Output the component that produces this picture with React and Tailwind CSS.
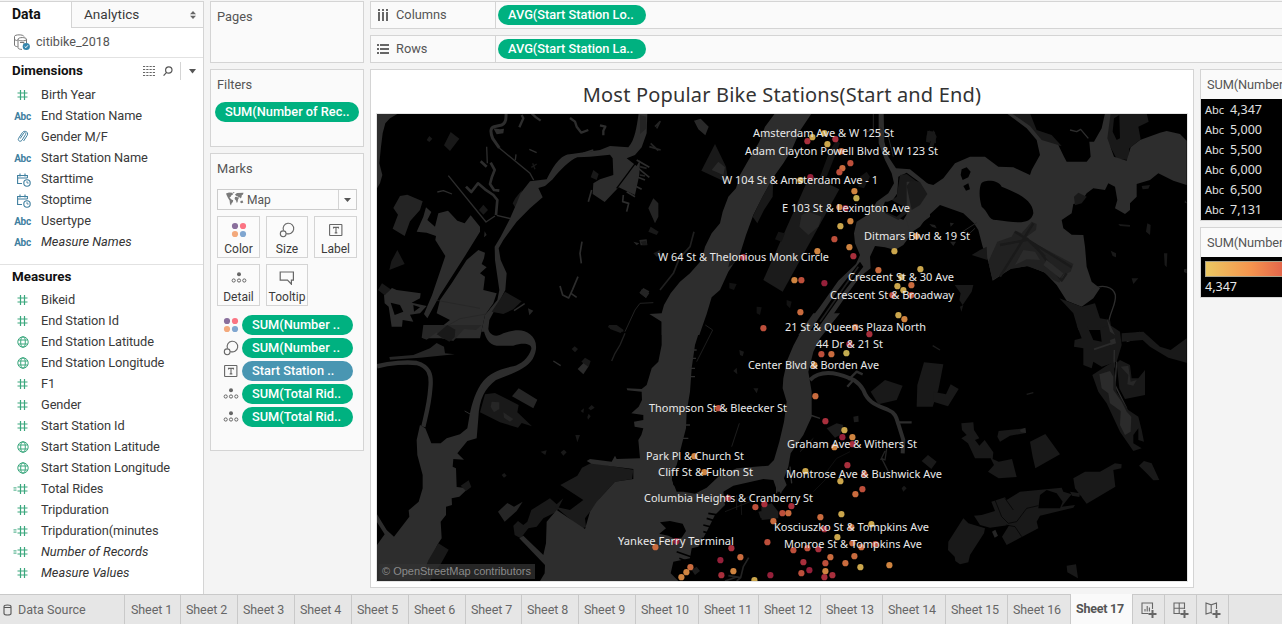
import React from "react";

const WATER = "#2d2d2d";
const PARK = "#191919";

/* ---------- icons ---------- */
function HashIcon({ calc }) {
  return (
    <svg width="16" height="12" viewBox="0 0 16 12" fill="none" stroke="#3aa77d" strokeWidth="1.2">
      <path d="M8.5 1v10M12.5 1v10M5.500 4h10M5.500 8h10" />
      {calc && <path d="M1.500 4.900h3M1.500 7.100h3" strokeWidth="1" />}
    </svg>
  );
}
function GlobeIcon() {
  return (
    <svg width="12" height="12" viewBox="0 0 12 12" fill="none" stroke="#3aa77d" strokeWidth="1">
      <circle cx="6" cy="6" r="5.2" />
      <ellipse cx="6" cy="6" rx="2.3" ry="5.2" />
      <path d="M1.3 4h9.4M1.3 8h9.4" />
    </svg>
  );
}
function ClipIcon() {
  return (
    <svg width="12" height="13" viewBox="0 0 12 13" fill="none" stroke="#3f7f9f" strokeWidth="1">
      <path d="M3.2 8.6 6.7 3.2c1-1.4 2.8-.2 1.9 1.200L5 10.200c-1.500 2.300-4.800.4-3.400-1.900L5.300 2.700C7.300-.2 12 1.800 10.200 5.400L6.600 11" />
    </svg>
  );
}
function DateIcon() {
  return (
    <svg width="14" height="14" viewBox="0 0 14 14" fill="none" stroke="#3f7f9f" strokeWidth="1.1">
      <path d="M5 10.500H.6V2.500h9.800v2.500M.6 5h9.800M3 .5v3M8 .5v3" />
      <circle cx="10" cy="10" r="3.200" />
      <path d="M10 8.200V10h1.600" strokeWidth=".9" />
    </svg>
  );
}
function FieldIcon({ type }) {
  if (type === "abc")
    return <span className="mt-px text-[10px] font-bold text-[#3f7f9f] tracking-[-0.3px]">Abc</span>;
  if (type === "clip") return <ClipIcon />;
  if (type === "date") return <span className="ml-[2px] mt-[3px] flex"><DateIcon /></span>;
  if (type === "globe") return <GlobeIcon />;
  return <span className="-ml-[5px] flex"><HashIcon calc={type === "calc"} /></span>;
}
function ColorIcon() {
  return (
    <svg width="16" height="16" viewBox="0 0 16 16">
      <circle cx="4" cy="4" r="3.100" fill="#8a6f9c" />
      <circle cx="12" cy="4" r="3.100" fill="#fb7483" />
      <circle cx="4" cy="12" r="3.100" fill="#f3a97c" />
      <circle cx="12" cy="12" r="3.100" fill="#80a6d0" />
    </svg>
  );
}
function SizeIcon() {
  return (
    <svg width="16" height="16" viewBox="0 0 16 16" fill="none" stroke="#666" strokeWidth="1.1">
      <path d="M4.500 8.500A5.300 5.300 0 1 1 7.300 11.400" />
      <circle cx="4.200" cy="11.800" r="2.900" />
    </svg>
  );
}
function LabelIcon() {
  return (
    <svg width="14" height="14" viewBox="0 0 14 14" fill="none" stroke="#666" strokeWidth="1.1">
      <rect x=".6" y="1.500" width="12.300" height="11" rx=".5" />
      <path d="M4.500 5.500V4.400h5v1.100M7 4.400v5.400M5.700 9.900h2.600" />
    </svg>
  );
}
function DetailIcon() {
  return (
    <svg width="16" height="12" viewBox="0 0 16 12" fill="none" stroke="#666" strokeWidth="1">
      <circle cx="8" cy="2.200" r="2" fill="#666" stroke="none" />
      <circle cx="2.700" cy="8.500" r="1.600" />
      <circle cx="8" cy="8.500" r="1.600" />
      <circle cx="13.300" cy="8.500" r="1.600" />
    </svg>
  );
}
function TooltipIcon() {
  return (
    <svg width="16" height="14" viewBox="0 0 16 14" fill="none" stroke="#666" strokeWidth="1.200">
      <path d="M1.200 1h13.200v8.200h-2v4L8.500 9.200H1.200z" />
    </svg>
  );
}
function WorldIcon() {
  return (
    <svg width="18" height="14" viewBox="0 0 18 14" fill="#7a7a7a">
      <path d="M0 1.500 3 .6 6.500.8 7 2.500 5.500 3.200 4.500 5 3.500 5.200 5 7.200 7.200 8.200 6.800 10 5.500 11.500 5 13.500 4 12 3.600 8.500 2 6 .8 3.500zM6.800.2 8.500 0 7.800 1.600zM9 2.500 11 1 17.500.8 17 2.500 15.800 3.300 15.500 5.200 14.500 6.500 13.800 5 12.800 6.200 12 4.500 10 3.800zM9 5 11 4.800 12.800 6.500 12 7.500 11.600 10 10.800 11 10 8.500 8.600 7zM14.500 9 16.500 8.500 17.300 10.500 15.500 11.200 14.300 10.500z" />
    </svg>
  );
}

/* ---------- left pane ---------- */
const DIMENSIONS = [
  ["hash", "Birth Year"], ["abc", "End Station Name"], ["clip", "Gender M/F"], ["abc", "Start Station Name"],
  ["date", "Starttime"], ["date", "Stoptime"], ["abc", "Usertype"], ["abc", "Measure Names", true],
];
const MEASURES = [
  ["hash", "Bikeid"], ["hash", "End Station Id"], ["globe", "End Station Latitude"], ["globe", "End Station Longitude"],
  ["hash", "F1"], ["hash", "Gender"], ["hash", "Start Station Id"], ["globe", "Start Station Latitude"],
  ["globe", "Start Station Longitude"], ["calc", "Total Rides"], ["hash", "Tripduration"],
  ["calc", "Tripduration(minutes"], ["calc", "Number of Records", true], ["hash", "Measure Values", true],
];
function Fields({ rows }) {
  return (
    <ul>
      {rows.map(([type, name, italic]) => (
        <li key={name} className="flex h-[21px] items-center">
          <span className="flex w-[46px] shrink-0 -mr-[5px] pr-[1px] items-center justify-center">
            <FieldIcon type={type} />
          </span>
          <span className={italic ? "italic text-[#333]" : "tracking-[-0.09px] text-[#3a3a3a]"}>{name}</span>
        </li>
      ))}
    </ul>
  );
}
function DataPane() {
  return (
    <aside className="mt-px flex h-[593px] w-[204px] shrink-0 flex-col border-t border-r border-[#d4d4d4] bg-white">
      <div className="flex h-[26px] text-[14px]">
        <div className="w-[71px] pl-3 pt-[2px] font-bold text-[#111] leading-5">Data</div>
        <div className="flex flex-1 items-center justify-between border-b border-l border-[#d4d4d4] bg-[#fafafa] pr-[7px] pl-3 text-[13.600px] text-[#3a3a3a]">
          <span>Analytics</span>
          <svg width="6" height="8" viewBox="0 0 6 8" fill="#666"><path d="M3 0 6 3.200H0zM3 8 0 4.800h6z" /></svg>
        </div>
      </div>
      <div className="flex h-[30px] items-center border-b border-[#e2e2e2] pl-[14px] pb-px text-[#555]">
        <svg width="17" height="17" viewBox="0 0 17 17" fill="none" stroke="#777" strokeWidth="1">
          <path d="M10 2.500C9.500.3.500.3.500 2.500V11c0 1 1.500 1.600 3 1.600M.5 5c.3 1 1.500 1.500 3 1.600" />
          <path d="M12.500 9V5.300C12.500 3 4 3 4 5.300v8.500c0 1 2 1.600 4 1.600M4 5.400c.5 2 8 2 8.500 0M6 8.500h4v3" />
          <circle cx="12.300" cy="12.500" r="3.600" fill="#3385ac" stroke="none" />
          <path d="m10.700 12.500 1.200 1.200 2-2.400" stroke="#fff" />
        </svg>
        <span className="ml-[5px] text-[12.600px]">citibike_2018</span>
      </div>
      <div className="flex h-[26px] items-center pl-3 text-[#111]">
        <span className="flex-1 pt-px text-[13.400px] font-bold">Dimensions</span>
        <svg width="12" height="10" viewBox="0 0 12 10" fill="none" stroke="#666" strokeWidth="1">
          <path d="M0 .5h12M0 3.500h12M0 6.500h12M0 9.500h12" strokeDasharray="2.200 1.070" />
        </svg>
        <svg className="ml-[8px]" width="10" height="11" viewBox="0 0 10 11" fill="none" stroke="#555" strokeWidth="1.200">
          <circle cx="5.800" cy="4" r="3.200" /><path d="M3.600 6.300.6 9.600" />
        </svg>
        <span className="ml-[7px] h-[18px] w-px bg-[#d4d4d4]" />
        <svg className="ml-2 mr-[7px]" width="7" height="5" viewBox="0 0 7 5" fill="#555"><path d="M0 0h7L3.500 4.500z" /></svg>
      </div>
      <Fields rows={DIMENSIONS} />
      <div className="mt-[12px] flex h-[25px] items-center border-t border-[#e2e2e2] pl-3 text-[13.400px] font-bold text-[#111]">Measures</div>
      <Fields rows={MEASURES} />
    </aside>
  );
}

/* ---------- shelves ---------- */
function Pill({ children, blue, className }) {
  return (
    <span className={"flex items-center whitespace-nowrap rounded-full pl-[10px] font-medium text-white h-5 " + (blue ? "bg-[#4996b2] " : "bg-[#00b180] ") + className}>
      {children}
    </span>
  );
}
const CARD = "border border-[#d4d4d4] bg-[#fafafa]";
function MarkButton({ icon, label }) {
  return (
    <div className="flex h-[42px] flex-col items-center justify-between border border-[#d4d4d4] bg-[#fbfbfb] pt-[5px] text-[12px] text-[#3a3a3a]">
      <span className="flex h-4 items-center">{icon}</span>
      <span className="leading-[15px]">{label}</span>
    </div>
  );
}
function Cards() {
  const marks = [
    [<ColorIcon />, "SUM(Number .."], [<SizeIcon />, "SUM(Number .."], [<LabelIcon />, "Start Station .."],
    [<DetailIcon />, "SUM(Total Rid.."], [<DetailIcon />, "SUM(Total Rid.."],
  ];
  return (
    <section className="ml-[6px] mt-px flex w-[154px] shrink-0 flex-col gap-[6px] text-[#555]">
      <div className={CARD + " h-[62px] px-[6px] pt-[7px] leading-4"}>Pages</div>
      <div className={CARD + " h-[78px] pt-[7px]"}>
        <div className="px-[6px] leading-4">Filters</div>
        <Pill className="mx-1 mt-[9px]">SUM(Number of Rec..</Pill>
      </div>
      <div className={CARD + " h-[298px] pt-[7px]"}>
        <div className="px-[6px] leading-4">Marks</div>
        <div className="mx-[6px] mt-[12px] flex h-[21px] items-center border border-[#ccc] bg-[#fbfbfb] text-[12px]">
          <span className="ml-2 -mt-[2px]"><WorldIcon /></span>
          <span className="ml-[3px] flex-1 pt-px">Map</span>
          <span className="flex h-full w-[18px] items-center justify-center border-l border-[#d4d4d4]">
            <svg width="7" height="4" viewBox="0 0 7 4" fill="#555"><path d="M0 0h7L3.500 4z" /></svg>
          </span>
        </div>
        <div className="mx-[6px] mt-[6px] grid grid-cols-[43px_42px_43px] gap-[6px]">
          <MarkButton icon={<ColorIcon />} label="Color" />
          <MarkButton icon={<SizeIcon />} label="Size" />
          <MarkButton icon={<LabelIcon />} label="Label" />
          <MarkButton icon={<DetailIcon />} label="Detail" />
          <MarkButton icon={<TooltipIcon />} label="Tooltip" />
        </div>
        <div className="mt-[9px] flex flex-col gap-[3px]">
          {marks.map(([icon, label], i) => (
            <div key={i} className="flex items-center">
              <span className="flex w-[31px] justify-center pl-[9px]">{icon}</span>
              <Pill blue={i === 2} className="w-[111px]">{label}</Pill>
            </div>
          ))}
        </div>
      </div>
    </section>
  );
}
function Shelf({ icon, name, pill }) {
  return (
    <div className="flex h-7 shrink-0 items-center border border-r-0 border-[#d4d4d4] bg-[#fafafa] text-[#555]">
      <div className="flex h-full w-[125px] items-center gap-[7px] border-r border-[#d4d4d4] pl-[6px]">{icon}<span>{name}</span></div>
      <Pill className="ml-[2px] w-[148px]">{pill}</Pill>
    </div>
  );
}

/* ---------- map ---------- */
const P = (d, fill) => <path key={d} d={d} fill={fill} />;
const S = (d, w, c = WATER) => <path key={d} d={d} fill="none" stroke={c} strokeWidth={w} strokeLinejoin="round" />;

function Terrain() {
  return (
    <>
      <g transform="translate(370 60) scale(.33333)">
        {P("M21 162H82L60 175 46 190 38 220 33 260 28 310 37 345 30 370 21 385z", WATER)}
        {S("M408 160Q410 190 395 195L372 200Q356 205 368 235L388 264", 9)}
        {S("M388 264 480 340 491 360", 4)}
        {P("M370 205 390 208 402 206 400 220 380 223z", WATER)}
        {S("M448 202 460 175 455 165M485 160 498 172 512 182M600 174 615 185 620 200 634 218 655 210M690 196 706 200 700 212 700 226", 7)}
        {S("M478 268 500 278M438 283 436 300M350 260 352 310", 4)}
        {S("M332 304 350 320M362 308 374 330 366 350 360 372 372 390 388 392M288 380 304 396 324 370 345 388 370 405 382 420 378 465", 8)}
        {S("M235 347 348 486 375 468M202 396 220 392 246 402M380 466 422 476", 4)}
        {S("M570 678 578 705 596 714 608 688 624 650M636 545 630 580 634 610M620 712 603 700", 5)}
        {P("M242 216 268 236 240 273 222 256zM178 228 187 236 178 246 170 240z", PARK)}
        {P("M436 415 456 390 440 450 428 430zM327 450 340 434 354 450 340 464zM670 330 686 342 680 360 662 352z", PARK)}
        {P("M70 444 90 408 112 404 158 424 150 450 120 484 104 528 68 506 84 464z", "#242424")}
        {P("M140 515 160 470 168 442 184 456 172 480 195 500 205 460 234 452 262 482 284 490 302 466 330 500 330 515 290 580 210 705 172 775 162 762 186 706 226 588 196 540 198 528 170 518z", WATER)}
        {P("M210 720 245 670 290 600 325 570 345 578 342 595 335 612 350 622 330 640 345 650 340 690 380 700 370 730 345 765 330 835 160 835 160 800 205 808 240 780 200 760z", WATER)}
        {S("M195 720 330 745M200 815 270 776 360 760", 2, "#242424")}
        {P("M42 705 66 684 80 690 152 700 150 715 125 728 170 738 150 760 120 764 130 785 98 780 96 800 65 800 56 740 44 730z", WATER)}
        {P("M62 728 90 735 100 755 74 765zM130 735 150 742 132 755z", "#000")}
        {P("M24 690 36 670 62 688 44 706zM82 570 104 612 58 630 64 604z", PARK)}
        {P("M806 160H832L830 220 815 262 795 285 770 295 800 318 810 300 808 345 795 405 746 382 704 426 668 402 670 370 690 358 730 345 728 295 720 284 660 290 622 292C600 300 570 330 548 358L525 378 505 384 518 412 480 445 440 485 400 540 386 565 392 600 410 640 406 690 385 730 358 780 354 815H334L345 765 382 720 388 690 375 600 374 560 392 530 418 480 440 430 452 400 480 364 530 358C550 320 570 282 605 282L690 270 720 258 775 262C795 240 800 200 806 160z", WATER)}
        {S("M740 385 800 305", 4, "#000")}
        {S("M800 300 838 322M805 325 838 352M800 350 825 360M790 375 815 388M770 395 795 410M760 405 758 425 776 430 770 455M665 390 655 425M640 280 670 270", 5)}
        {P("M405 695 455 724 430 748 400 762 365 755z", PARK)}
        {S("M432 752 464 731", 4)}
        {P("M474 745 490 752 478 766zM344 514 350 525 342 532zM808 540 830 538 832 555 812 556zM790 545 808 550 800 556zM820 684 838 694 828 714 808 698z", "#262626")}
        {S("M765 815 795 750 810 730 850 728", 3, "#222")}
        {S("M488 310 495 328M500 312 484 322", 4, PARK)}
      </g>
      <g transform="translate(370 325) scale(.33333)">
        {S("M21 124C60 114 110 110 140 114 175 124 186 145 181 190 178 235 170 262 160 305", 13)}
        {P("M338 0C345 40 355 58 380 62L430 62C460 52 486 56 484 72 476 100 452 118 430 124 385 132 358 148 340 168 318 195 305 235 298 275L292 310 270 328 230 340 212 355 184 355 166 310 150 300 140 345 142 390 158 450 158 490 146 530 116 556 118 575 72 635 50 615 21 568 21 592 44 628 21 660V768H150L205 655 215 640 212 590 228 570 228 545 246 540 245 520 268 515 295 490 260 486 258 430 248 425 250 402 282 404 262 385 292 348 320 340 325 280C328 220 345 190 378 165 420 148 470 132 488 102 505 70 500 44 480 28 460 10 430 14 400 25 375 40 355 30 352 0z", WATER)}
        {P("M160 0H335L318 15 282 12 250 48 215 40 200 22 170 44 155 38zM58 96 130 90 180 70 200 54 222 65 225 85 254 88 150 98 60 104z", "#262626")}
        {P("M200 28 232 0 256 14 254 36 238 50z", PARK)}
        {P("M446 190 502 224 490 250 426 214z", "#262626")}
        {P("M345 208 375 204 446 240 442 262 486 304 455 294 444 308 390 292 330 262z", PARK)}
        {P("M365 230 388 232 388 252 372 262 362 246zM400 262 430 282 420 290 402 278z", "#262626")}
        {P("M272 482 296 466 304 486 288 498zM205 655 236 674 214 714 198 735 180 768 150 768 175 706z", PARK)}
        {P("M384 560 412 534 432 545 458 530 440 558 404 590z", "#262626")}
        {P("M430 602 444 588 460 600 472 590 484 555 540 520 560 538 580 520 560 560 520 580 500 605 475 610 452 640 434 630z", PARK)}
        {P("M571 480 622 452 636 428 665 413 790 434 786 462 735 470 690 520 660 560 645 580 648 605 635 612 556 545 600 555 640 525z", "#1b1b1b")}
        {P("M623 132 644 110 655 125 640 148z", "#2b2b2b")}
        {P("M634 110 645 98 662 108 656 126zM605 72 614 64 624 72 615 82zM655 250 665 240 674 248 662 256zM652 276 656 266 662 274 654 284zM616 330 630 330 622 352zM632 258 642 250 640 264zM512 380 530 376 526 390zM572 382 582 374 590 382 580 392zM395 450 403 444 410 452 402 458z", PARK)}
        {S("M550 108 572 122", 4)}
        {S("M725 108 735 85 750 60 765 25M715 5 760 18", 4, "#202020")}
        {P("M716 0H740L760 14 752 24 720 12z", PARK)}
        {S("M284 258 302 268", 3)}
      </g>
      <g transform="translate(640 325) scale(.33333)">
        {P("M65-12 65 60 55 110 35 130 20 180 5 192-40 190-38 196 5 200 6 225-4 245-26 265 10 270 10 285-18 290-16 305 10 310 4 330-5 345 0 400-70 402-75 392-85 410-150 402-160 408-145 416-20 432-20 462-75 470-130 530-150 560-165 612-250 555-280 590-282 655-290 690-350 632-362 640-285 720-286 745-300 768H115L92 745 100 710 150 700 155 670 175 665 200 620 225 570 255 540 250 500 280 482 370 462 400 465 412 500 425 500 440 480 432 460 445 425 452 385 490 330 515 275 515 200 505 140 520 80 540 40 600-35 520-35 485 15 460 62 442 105 430 160 428 190 440 230 432 290 418 350 402 405 385 422 290 430 235 455 200 488 165 506 130 500 100 480 95 450 110 420 125 360 138 310 140 260 150 200 155 130 165 60 195-35z", WATER)}
        {S("M150 75H170M150 100H168M148 130H165M150 155H165M135 300H150M128 340H145", 4)}
        {P("M60 592 90 588 128 596 138 618 125 638 100 640 85 632 58 626 78 610z", "#000")}
        {P("M95 462 112 440 122 450 110 480 130 500 110 500z", "#000")}
        {S("M185 640 225 652M190 620 235 632M190 600 230 610M200 580 240 592M205 565 245 572M118 700 155 715M110 680 155 696M110 715 140 735", 5, "#000")}
        {S("M510 165C530 145 560 140 595 148 640 160 655 170 670 195 685 235 710 240 745 255 770 265 770 285 776 300L790 345 788 385", 12)}
        {S("M625 165 650 140 668 148M622 185 640 165M775 292H815", 7)}
        {S("M740 370 735 405 725 400 745 440M722 405 735 378", 4, "#242424")}
        {S("M450 425 455 475M410 470V505M425 470 422 505M510 270 540 280", 4)}
        {P("M692 200 735 165 788 182 770 225 715 238z", PARK)}
        {P("M830 245 832 180 852 112 910 118 895 195 878 245z", PARK)}
        {P("M560 310 590 295 610 300 600 330 585 338zM640 275 655 272 656 290 642 292zM364 545 395 535 415 560 415 580 365 585zM155 735 170 725 180 738 165 750zM355 560 380 555 395 575 362 580z", "#1c1c1c")}
        {S("M275 365 298 295M170 110 218 15 196 0M480 380 520 340", 3, "#1d1d1d")}
        {P("M785 490 792 482 800 490 790 500zM280 138 290 128 292 148zM340 190 355 190 350 205zM298 75 312 80 308 94 300 90zM325 240 335 238 332 260z", PARK)}
        {S("M326 698 310 725 302 758 265 752M302 758 290 768M255 768 290 756", 5, "#242424")}
        {S("M290 510V555M302 512 305 570M312 520 345 510M255 560 330 530", 2, "#1f1f1f")}
        {S("M560 440 590 400 630 380M520 500 560 460", 2, "#171717")}
      </g>
      <g transform="translate(640 60) scale(.33333)">
        {P("M405 160 375 200 358 245 320 310 300 345 288 385 265 410 248 455 240 490 215 520 195 560 185 600 150 640 120 665 92 700 72 735 65 760 28 762 65 785V825H178L200 762 215 712 240 690 265 635 300 582 318 525 340 465 368 410 400 352 430 310 455 270 480 212 515 160z", WATER)}
        {P("M398 410 372 450 352 490 338 470 362 420 400 352z", PARK)}
        {P("M225 252 258 320 265 370 184 332z", PARK)}
        {P("M235 305 255 322 250 345 215 330zM162 182 182 176 206 200 196 226 175 208z", "#292929")}
        {P("M0 165 18 170 20 205 0 222zM40 415 55 430 55 470 45 490 25 445zM5 688 28 700 18 714 0 700z", "#242424")}
        {S("M28 260 62 270M32 250 55 272M0 320 20 325M0 345 15 348M45 200 60 185 50 205", 5, "#242424")}
        {P("M25 515 32 500 56 515 50 525zM2 545 18 542 22 556 8 556zM40 580 60 570 62 585 50 590z", PARK)}
        {S("M162 515 150 560 118 595 100 640 60 690", 5, "#202020")}
        {P("M510 345 598 388 428 695 370 660z", "#1b1b1b")}
        {P("M485 465 505 455 545 470 535 500 505 525 478 500z", "#272727")}
        {P("M540 350 570 270 590 240 600 250 560 350zM415 515 435 520 425 545 405 538z", "#131313")}
        {P("M716 160H731L733 245 745 290 768 325 810 328 872 378 868 388 800 338 775 350 772 400 755 425 735 425 725 450 790 480 840 400 870 378V470L830 500 790 555 765 570 735 562 705 558 690 590 692 625 660 650 620 705 575 770 545 825H475L540 740 595 662 648 612 660 585 645 550 642 520 650 485 690 460 710 425 745 400 762 370 755 340 735 300 716 250z", WATER)}
        {P("M660 605 670 620 600 710 530 810 512 810 590 695z", "#000")}
        {S("M655 620 540 785", 5, "#202020")}
        {P("M780 345 800 342 862 388 855 420 820 445 775 480 735 460 738 432 770 410z", PARK)}
        {P("M735 430 755 420 800 445 770 470 735 455zM700 578C715 560 740 560 760 585 745 610 715 605 702 612z", "#000")}
        {P("M660 350 680 335 690 350 672 385 655 380z", "#131313")}
        {P("M860 225 870 210V248L858 245zM868 260 880 210 890 230 880 260z", PARK)}
        {S("M700 160V210L680 215M720 200 745 230 760 290", 3, "#242424")}
        {P("M270 600 285 600 280 612 265 622zM268 668 290 672 282 690 268 685zM350 740 365 742 360 765 350 760zM440 720 455 725 450 745 440 735z", "#121212")}
      </g>
      <g transform="translate(920 60) scale(.33333)">
        {P("M268 160H330L350 210 395 225 425 258 360 246 330 205z", PARK)}
        {P("M565 160H680L686 185 655 200 662 238 628 265 625 300 590 296 560 240z", PARK)}
        {P("M582 175 598 165 600 235 590 240 578 215z", "#000")}
        {P("M-40 365 0 365 40 375 70 355 105 310 150 290 195 290 235 320 280 322 330 345 335 330 360 285 350 240 320 205 260 160H275L330 198 365 240 415 255 432 290 440 305H500L512 290 508 245H522L545 205 555 160H572L562 235 582 290 620 302 632 262 660 240 720 218 740 213 780 222 800 242V375L760 362 715 340 690 360 650 372V410L630 430 630 450 615 462 585 445 592 420 585 380 565 370 555 390 520 385 500 400 482 428 460 432 455 460 425 480 430 505 455 524 490 525 495 560 500 620 515 665 540 685 520 715 485 740 440 722 410 675 375 638 325 618 275 625 218 662 205 605 188 560 175 510 162 490 130 460 60 435 20 472 0 500-30 520-40 480z", WATER)}
        {P("M-40 378-28 362 0 366 22 402 0 435-25 450z", "#1a1a1a")}
        {P("M183 372C190 358 235 358 245 380 280 395 340 415 340 460 330 500 280 485 230 480 205 482 205 455 185 440 176 410 178 385 183 372z", "#000")}
        {P("M122 345 125 328 140 322 152 335 145 352 128 360zM130 378 145 370 150 388 138 392z", "#000")}
        {P("M232 545 275 530 285 512 305 520 335 485 350 492 348 510 320 530 335 545 460 612 452 635 430 645 418 668 400 660 370 635 320 618 270 628 218 660 205 605z", "#212121")}
        {S("M340 490 240 650M285 515 455 622M320 535 375 590M240 555 320 540M345 555 425 662 440 640", 7, "#1a1a1a")}
        {P("M285 615 310 570 345 575 360 600 320 598zM370 615 380 600 430 640 420 655z", "#2b2b2b")}
        {P("M462 410 475 398 500 410 485 430 465 436z", PARK)}
        {S("M450 210 470 215 482 208 505 235", 4)}
        {S("M515 690C545 670 580 680 586 705 590 735 565 760 565 800", 4)}
        {P("M418 715 485 740 525 730 540 775 570 780 575 810H475L460 760z", PARK)}
        {P("M104 675 160 675 155 695 128 735 118 720 122 700zM120 740 130 735 124 755zM22 212 45 215 48 250 20 240zM180 570 200 560 202 600 155 585zM682 490 692 495 690 525 678 515zM595 492 630 495 630 500 600 498zM572 572 588 580 588 592 578 588zM732 580 742 580 740 622 734 615zM635 655 655 655 640 672zM665 378 690 375 685 386 668 388z", PARK)}
        {S("M128 515 170 488M140 528 165 505", 3, "#242424")}
        {P("M28 492 45 495 50 505 36 500zM90 488 102 490 92 500zM795 420 801 430 794 428zM792 628 800 626V640L792 636zM90 545 108 545 100 558z", "#202020")}
      </g>
      <g transform="translate(920 325) scale(.33333)">
        {P("M470 0 500 0 520 45 545 50 540 10 570 0 600 20 605 60 590 110 545 125 520 110 515 130 490 120 490 70 462 65 464 45 485 40z", PARK)}
        {P("M560-20 570 20 585 30M570 45 585 40 588 55 572 60zM620 30 660 20 670 35 620 52z", "#2b2b2b")}
        {S("M522 73 575 55", 6, "#2b2b2b")}
        {P("M605 25 670 20 720 65 752 75 800 40V113L745 98 690 65 668 45 605 50z", PARK)}
        {S("M583 75 582 125 575 150M590 110 585 180 620 250", 4)}
        {P("M517 150 555 125 580 110 590 200 625 255 655 275 665 315 672 350 655 345 655 310 640 330 640 355 665 370 640 378 600 320 560 235 535 200z", PARK)}
        {P("M538 148 570 138 580 155 580 195 605 230 620 260 634 275 632 320 615 330 600 300 602 258 570 235 565 205 545 190z", "#2b2b2b")}
        {P("M590 115 600 105 630 120 635 160 655 160 675 135 675 210 615 222 598 190z", PARK)}
        {P("M602 125 625 122 632 170 650 165 640 182 622 178 625 150z", "#272727")}
        {P("M40 200 78 208 92 178 116 192 84 244 40 230zM5 408 24 390 50 410 34 432z", PARK)}
        {P("M124 295 160 292 162 315 178 340 165 345 178 362 194 345 220 382 218 402 236 410 276 402 290 456 236 460 204 440 222 420 212 400 165 400 144 355 124 340 140 330 126 315zM236 318 316 310 318 324 270 332 240 350 232 335zM330 350 376 327 420 388 346 430 338 395z", PARK)}
        {P("M300 314 316 308 318 324 302 322z", "#262626")}
        {P("M460 460 495 440 540 440 585 415 605 418 604 430 580 435 586 485 500 536 465 490zM672 408 695 415 718 465 700 466 680 445 657 422z", PARK)}
        {P("M214 530 255 517 260 525 300 500 425 488 430 500 455 508 445 520 425 545 465 540 460 548 360 572 350 590 355 610 260 660 246 635 268 600 210 608 180 600 162 572 185 570 225 558z", PARK)}
        {P("M355 550 360 510 380 495 410 505 428 530 420 550z", "#000")}
        {S("M225 525 245 575 265 595 290 590 320 550 355 542M258 600 285 605 305 635M255 520 280 555M460 512 485 516", 2, "#000")}
        {P("M85 650 130 580 145 595 195 610 192 625 150 690 145 712 120 718 106 708 104 695 84 675zM440 722 468 718 474 760 442 742zM450 500 480 505 478 516 456 512z", PARK)}
        {P("M216 620 226 614 234 632 224 638z", "#262626")}
        {S("M38 62 60 75M320 208 340 203", 4, "#1c1c1c")}
      </g>
    </>
  );
}

const Y = "#cba64c", O = "#cf8440", T = "#c96b3e", R = "#bd4f3b", C = "#a82f3c", D = "#95203a";
const DOTS = [
  [807,141,C],[812,137,Y],[824,133,Y],[835,139,C],[827,144,Y],[841,151,T],[850,163,R],[842,168,T],[839,172,R],
  [800,180,Y],[810,177,D],[854,191,O],[856,198,"#c3ac50"],[839,207,O],[845,208,D],[850,221,O],[840,226,Y],[834,239,R],
  [849,247,O],[853,256,C],[817,251,O],[743,257,C],[794,280,O],[801,280,R],[824,283,D],[800,312,T],[763,328,R],
  [916,236,O],[894,251,Y],[878,270,T],[920,269,Y],[901,277,Y],[897,286,Y],[911,285,T],[903,290,Y],[892,295,R],[911,295,R],
  [898,315,Y],[904,319,O],[855,327,T],[869,334,C],[849,344,C],[821,354,R],[831,354,T],[846,353,"#c3ac50"],[814,365,O],
  [815,396,T],[718,408,R],[825,421,C],[844,430,Y],[842,437,D],[852,437,O],[834,447,O],[852,444,C],[847,465,C],
  [694,456,O],[704,472,O],[805,471,Y],[864,474,R],[840,481,Y],[862,489,R],[855,494,T],
  [728,498,C],[755,507,R],[764,504,C],[791,506,C],[782,513,R],[788,513,T],[773,521,T],[820,517,T],[841,514,Y],[871,524,Y],
  [824,529,C],[851,527,T],[837,537,Y],[767,542,R],[676,541,D],[655,547,T],[731,548,C],[740,557,T],[720,560,D],[690,567,T],
  [686,572,O],[681,577,O],[721,575,C],[733,571,O],[754,580,Y],[770,575,D],[793,550,R],[807,548,R],[818,549,C],
  [852,543,T],[861,547,T],[875,544,R],[854,556,T],[830,557,T],[825,563,R],[845,563,T],[803,562,C],[809,570,D],[801,573,R],
  [825,571,O],[824,577,C],[832,575,C],[860,567,Y],[889,565,O],
];
const LABELS = [
  ["Amsterdam Ave & W 125 St",753,137,141],["Adam Clayton Powell Blvd & W 123 St",745,155,193],
  ["W 104 St & Amsterdam Ave - 1",722,184,156],["E 103 St & Lexington Ave",782,212,128],["Ditmars Blvd & 19 St",864,240,106],
  ["W 64 St & Thelonious Monk Circle",658,261,171],["Crescent St & 30 Ave",848,281,106],["Crescent St & Broadway",830,299,124],
  ["21 St & Queens Plaza North",785,331,141],["44 Dr & 21 St",816,348,67],["Center Blvd & Borden Ave",748,369,131],
  ["Thompson St & Bleecker St",649,412,138],["Graham Ave & Withers St",787,448,130],["Park Pl & Church St",646,460,98],
  ["Cliff St & Fulton St",658,476,95],["Montrose Ave & Bushwick Ave",786,478,156],["Columbia Heights & Cranberry St",644,502,169],
  ["Kosciuszko St & Tompkins Ave",774,531,155],["Yankee Ferry Terminal",618,545,116],["Monroe St & Tompkins Ave",784,548,138],
];
function StationMap() {
  return (
    <svg width="810" height="467" viewBox="377 114 810 467" className="block bg-black">
      <Terrain />
      <rect x="379" y="564" width="156" height="15" fill="#333" fillOpacity=".75" />
      <text x="382" y="575" textLength="149" fill="#8a8a8a" className="font-['Liberation_Sans'] text-[11px]">© OpenStreetMap contributors</text>
      {DOTS.map(([x, y, c]) => <circle key={x + "-" + y} cx={x + 0.4} cy={y + 0.2} r="3.100" fill={c} />)}
      {LABELS.map(([t, x, y, w]) => (
        <text key={t} x={x} y={y} textLength={w} lengthAdjust="spacingAndGlyphs" fill="#e9e9e9" className="font-['Noto_Sans'] text-[11px]">{t}</text>
      ))}
    </svg>
  );
}

/* ---------- sheet tabs ---------- */
const TABS = [
  ["Sheet 1", "w-[56px]"], ["Sheet 2", "w-[57px]"], ["Sheet 3", "w-[57px]"], ["Sheet 4", "w-[57px]"], ["Sheet 5", "w-[57px]"],
  ["Sheet 6", "w-[57px]"], ["Sheet 7", "w-[56px]"], ["Sheet 8", "w-[57px]"], ["Sheet 9", "w-[57px]"], ["Sheet 10", "w-[63px]"],
  ["Sheet 11", "w-[60px]"], ["Sheet 12", "w-[62px]"], ["Sheet 13", "w-[62px]"], ["Sheet 14", "w-[63px]"], ["Sheet 15", "w-[62px]"],
  ["Sheet 16", "w-[63px]"],
];
const NEW_ICONS = [
  "M11.500 7V1H1v10.500h6.500M4 9.500V7M6.200 9.500V4M8.400 9.500V5.500",
  "M11.500 7V1H1v10.500h6.500M1 6.200h10.500M6.200 1v10.500",
  "M7 11.500 6.200 10.500 1 12V1l5.200 1.800L11.500 1v6M6.200 2.800v7.700",
];
function SheetTabs() {
  const cell = "flex shrink-0 items-center border-r border-[#c9c9c9] pt-px ";
  return (
    <nav className="flex h-[30px] border-t border-[#c9c9c9] bg-[#e6e6e6] text-[12.5px] tracking-[-0.1px] text-[#666]">
      <div className={cell + "w-[125px] pl-[3px]"}>
        <svg width="10" height="12" viewBox="0 0 10 12" fill="none" stroke="#555" strokeWidth="1.100">
          <path d="M1 2.500C1 .5 8 .5 8 2.500v7c0 2-7 2-7 0zM1 3.500h7" />
        </svg>
        <span className="ml-[5px] tracking-normal">Data Source</span>
      </div>
      {TABS.map(([t, w], i) => <div key={t} className={cell + w + (i === 0 ? " pl-[6px]" : " pl-[5px]")}>{t}</div>)}
      <div className={cell + "w-[62px] -mt-px bg-[#fafafa] pt-0 pl-[5px] font-bold text-[#555] tracking-[-0.25px]"}>Sheet 17</div>
      {NEW_ICONS.map((d) => (
        <div key={d} className={cell + "w-8 justify-center pl-px"}>
          <svg width="16" height="16" viewBox="0 0 16 16" fill="none" stroke="#666" strokeWidth="1.100">
            <path d={d} /><path d="M11.500 8v8M7.500 12h8" strokeWidth="2" />
          </svg>
        </div>
      ))}
    </nav>
  );
}

export default function App() {
  return (
    <div className="h-[624px] w-[1282px] overflow-hidden bg-[#f4f4f4] font-['Roboto',sans-serif] text-[12.8px]">
      <div className="flex h-[594px]">
        <DataPane />
        <Cards />
        <main className="ml-[6px] mt-px flex min-w-0 flex-1 flex-col gap-[6px]">
          <Shelf name="Columns" pill="AVG(Start Station Lo.." icon={
            <svg width="12" height="12" viewBox="0 0 12 12" fill="#666"><path d="M1 0h2v2H1zM5 0h2v2H5zM9 0h2v2H9zM1 3h2v9H1zM5 3h2v9H5zM9 3h2v9H9z" /></svg>
          } />
          <Shelf name="Rows" pill="AVG(Start Station La.." icon={
            <svg width="12" height="12" viewBox="0 0 12 12" fill="#666"><path d="M0 1h2v2H0zM0 5h2v2H0zM0 9h2v2H0zM3 1h9v2H3zM3 5h9v2H3zM3 9h9v2H3z" /></svg>
          } />
          <div className="flex gap-[6px]">
            <div className="h-[519px] w-[824px] shrink-0 border border-[#d4d4d4] bg-white">
              <h1 className="h-[43px] pt-[11px] text-center font-['Noto_Sans'] text-[20px] leading-[28px] tracking-[0.18px] text-[#333]">Most Popular Bike Stations(Start and End)</h1>
              <div className="mx-[5px] border border-[#e4e4e4]"><StationMap /></div>
            </div>
            <div className="flex w-[82px] shrink-0 flex-col gap-[6px]">
              <div className="h-[152px] border border-r-0 border-[#d4d4d4] bg-[#fafafa]">
                <div className="flex h-[29px] items-center whitespace-nowrap pl-[6px] tracking-[-0.1px] text-[#555]">SUM(Number</div>
                <div className="h-[121px] bg-black pt-px pl-1 font-['Noto_Sans'] text-[#e0e0e0]">
                  {["4,347", "5,000", "5,500", "6,000", "6,500", "7,131"].map((v) => (
                    <div key={v} className="flex h-5 items-center">
                      <span className="w-[25px] text-[11px]">Abc</span><span className="text-[12.5px]">{v}</span>
                    </div>
                  ))}
                </div>
              </div>
              <div className="h-[71px] border border-r-0 border-[#d4d4d4] bg-[#fafafa]">
                <div className="flex h-[29px] items-center whitespace-nowrap pl-[6px] tracking-[-0.1px] text-[#555]">SUM(Number</div>
                <div className="h-10 bg-black pl-1 pt-1 font-['Noto_Sans'] text-[12.5px] text-[#e9e9e9]">
                  <div className="h-4 border border-r-0 border-[#aaa38c] bg-[linear-gradient(90deg,#ebc862_0,#f5944e_45px,#e4674b_76px)]" />
                  <div className="leading-[20px]">4,347</div>
                </div>
              </div>
            </div>
          </div>
        </main>
      </div>
      <SheetTabs />
    </div>
  );
}
